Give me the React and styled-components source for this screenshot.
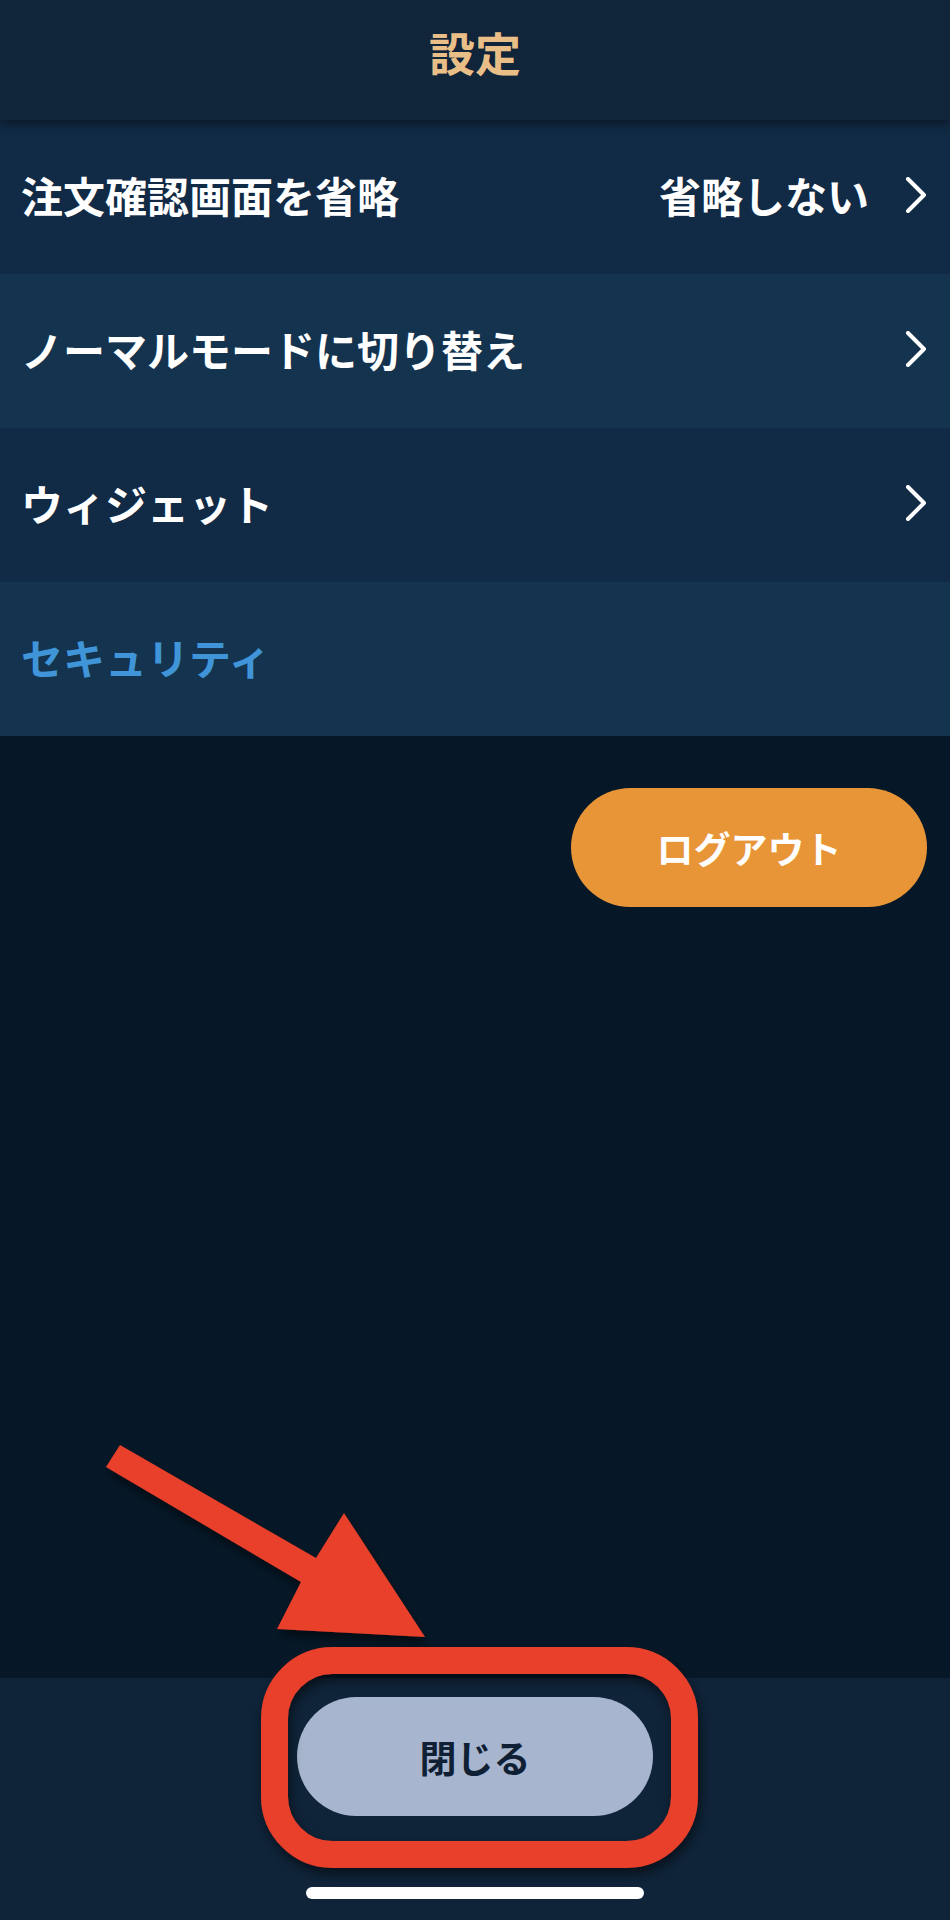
import React from 'react';
import styled, { createGlobalStyle } from 'styled-components';

const GlobalStyle = createGlobalStyle`
    html, body {
        margin: 0;
        padding: 0;
        background: #061828;
    }
    body {
        font-family: "Noto Sans CJK JP", "Noto Sans", sans-serif;
        -webkit-font-smoothing: antialiased;
    }
`;

const rows = [
    { label: '注文確認画面を省略', value: '省略しない', chevron: true, tone: 'dark' },
    { label: 'ノーマルモードに切り替え', chevron: true, tone: 'light' },
    { label: 'ウィジェット', chevron: true, tone: 'dark' },
    { label: 'セキュリティ', accent: true, tone: 'light' },
];

const Chevron = () => (
    <svg width="22" height="36" viewBox="0 0 22 36" fill="none">
        <polyline points="3,2 19,18 3,34" stroke="#ffffff" strokeWidth="4" strokeLinecap="round" strokeLinejoin="round" />
    </svg>
);

const App = () => {
    return (
        <>
            <GlobalStyle />
            <Page>
                <Header>
                    <Title>設定</Title>
                </Header>
                <List>
                    {rows.map((row) => (
                        <Row key={row.label} $tone={row.tone}>
                            <Label $accent={row.accent}>{row.label}</Label>
                            <Trail>
                                {row.value && <Value>{row.value}</Value>}
                                {row.chevron && <Chevron />}
                            </Trail>
                        </Row>
                    ))}
                </List>
                <Content>
                    <LogoutButton>ログアウト</LogoutButton>
                </Content>
                <BottomBar>
                    <CloseButton>閉じる</CloseButton>
                    <HomeIndicator />
                </BottomBar>
                <Annotation width="950" height="1920" viewBox="0 0 950 1920">
                    <defs>
                        <filter id="shade" x="-20%" y="-20%" width="140%" height="140%">
                            <feDropShadow dx="2" dy="6" stdDeviation="6" floodColor="#000000" floodOpacity="0.55" />
                        </filter>
                    </defs>
                    <g filter="url(#shade)">
                        <polygon
                            points="120,1445 316,1558 344,1513 425,1637 277,1629 301,1582 106,1467"
                            fill="#E8402A"
                        />
                        <rect
                            x="274.5"
                            y="1660.5"
                            width="410"
                            height="194"
                            rx="58"
                            ry="58"
                            fill="none"
                            stroke="#E8402A"
                            strokeWidth="27"
                        />
                    </g>
                </Annotation>
            </Page>
        </>
    );
};

const Page = styled.div`
    position: relative;
    width: 950px;
    height: 1920px;
    display: flex;
    flex-direction: column;
    background: #061828;
    overflow: hidden;
`;

const Header = styled.header`
    height: 120px;
    flex-shrink: 0;
    display: flex;
    align-items: center;
    justify-content: center;
    background: #10243a;
    box-shadow: 0 4px 10px rgba(0, 0, 0, 0.45);
    position: relative;
    z-index: 1;
`;

const Title = styled.h1`
    margin: 0 0 18px;
    font-size: 46px;
    font-weight: 700;
    color: #e9bf87;
    line-height: 1;
`;

const List = styled.div`
    display: flex;
    flex-direction: column;
`;

const Row = styled.div`
    height: 154px;
    display: flex;
    align-items: center;
    justify-content: space-between;
    padding: 0 23px 4px 21px;
    box-sizing: border-box;
    background: ${(p) => (p.$tone === 'light' ? '#14334f' : '#112a45')};
`;

const Label = styled.span`
    font-size: 42px;
    font-weight: 700;
    line-height: 1;
    color: ${(p) => (p.$accent ? '#3f95d8' : '#ffffff')};
`;

const Trail = styled.div`
    display: flex;
    align-items: center;
    gap: 36px;
`;

const Value = styled.span`
    font-size: 42px;
    font-weight: 700;
    line-height: 1;
    color: #ffffff;
`;

const Content = styled.div`
    flex: 1;
    display: flex;
    justify-content: flex-end;
    align-items: flex-start;
    padding: 52px 23px 0 0;
`;

const LogoutButton = styled.button`
    width: 356px;
    height: 119px;
    border: none;
    border-radius: 60px;
    background: #e89538;
    color: #ffffff;
    font-family: inherit;
    font-size: 37px;
    font-weight: 700;
    cursor: pointer;
`;

const BottomBar = styled.footer`
    height: 242px;
    flex-shrink: 0;
    display: flex;
    flex-direction: column;
    align-items: center;
    padding-top: 19px;
    box-sizing: border-box;
    background: #0f2439;
`;

const CloseButton = styled.button`
    width: 356px;
    height: 119px;
    border: none;
    border-radius: 60px;
    background: #a7b6ce;
    color: #0f2035;
    font-family: inherit;
    font-size: 37px;
    font-weight: 700;
    cursor: pointer;
`;

const HomeIndicator = styled.div`
    width: 338px;
    height: 12px;
    margin-top: 71px;
    border-radius: 6px;
    background: #ffffff;
`;

const Annotation = styled.svg`
    position: absolute;
    left: 0;
    top: 0;
    pointer-events: none;
`;

export default App;
